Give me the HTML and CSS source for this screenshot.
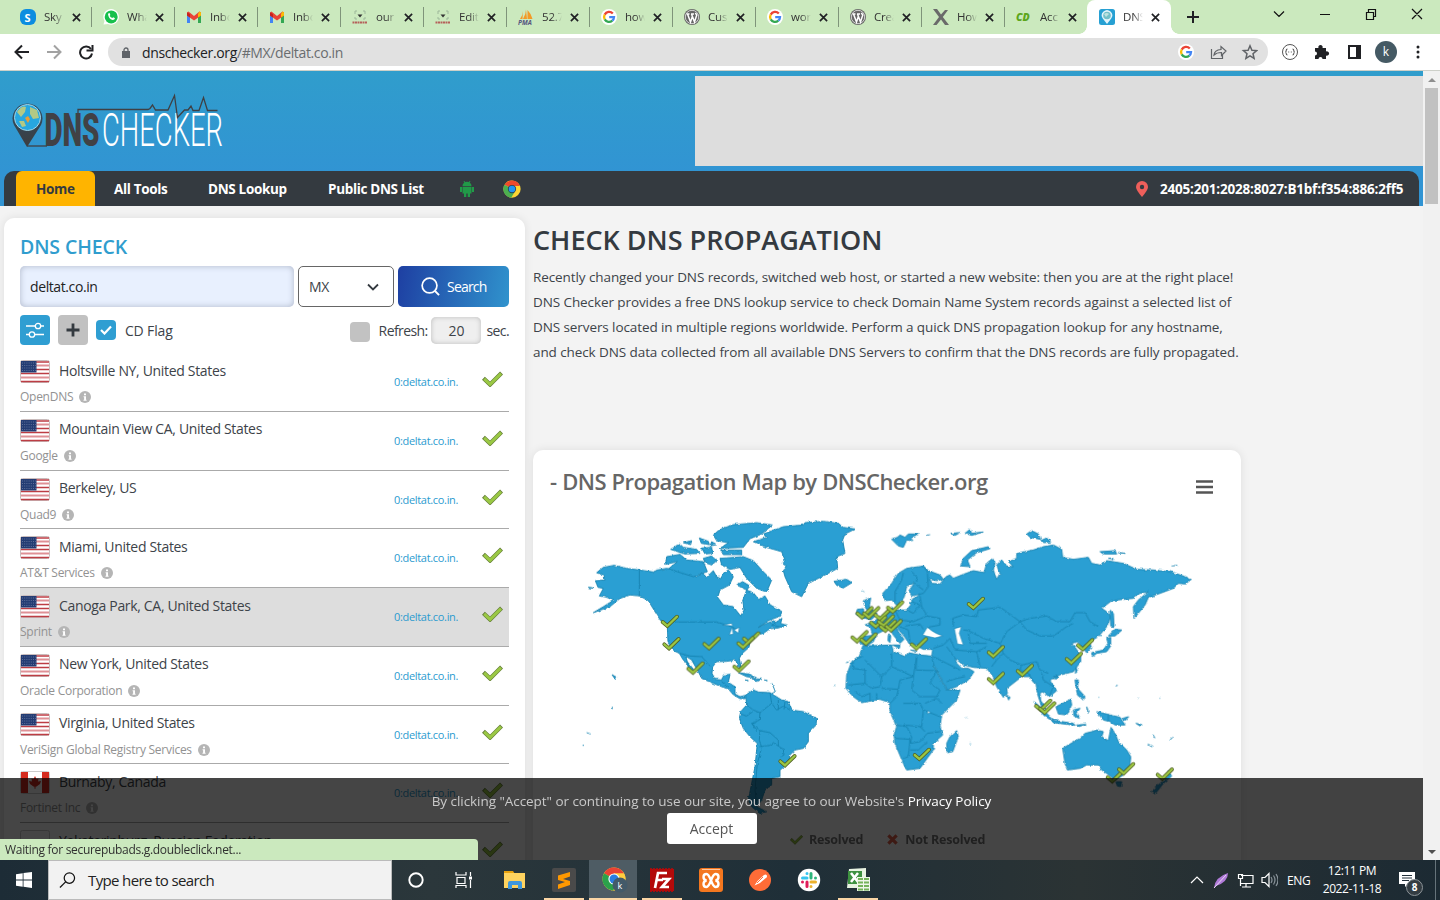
FILE: index.html
```html
<!DOCTYPE html>
<html lang="en">
<head>
<meta charset="utf-8">
<title>DNS Checker</title>
<link rel="stylesheet" href="styles.css">
</head>
<body>
<svg class="defs" aria-hidden="true">
  <defs>
    <linearGradient id="pin-grad" x1="0" y1="0" x2="0" y2="1"><stop offset="0" stop-color="#2c4e66"/><stop offset="1" stop-color="#3d3d3f"/></linearGradient>
    <symbol id="x" viewBox="0 0 10 10"><path d="M1 1l8 8M9 1l-8 8" stroke="#202124" stroke-width="1.9"/></symbol>
    <symbol id="gmail" viewBox="0 0 16 12"><path d="M1 1v11h3V4z" fill="#4285f4"/><path d="M15 1v11h-3V4z" fill="#34a853"/><path d="M1 1.500L2.500 .5 8 5 13.500 .5 15 1.500V4.500L8 9.500 1 4.500z" fill="#ea4335"/><path d="M12 3l1.500-2.500 1.500 1v3l-3 2z" fill="#fbbc04"/><path d="M1 1.500v3l3 2V3z" fill="#c5221f"/></symbol>
    <symbol id="google" viewBox="0 0 16 16"><circle cx="8" cy="8" r="8" fill="#fff"/><g fill="none" stroke-width="2.300"><path d="M11.800 4.500A5 5 0 0 0 3.700 5.600" stroke="#ea4335"/><path d="M3.700 5.600a5 5 0 0 0 0 4.800" stroke="#fbbc05"/><path d="M3.700 10.400a5 5 0 0 0 7.600 1.300" stroke="#34a853"/><path d="M11.300 11.700A5 5 0 0 0 13 8.200H8.200" stroke="#4285f4"/></g></symbol>
    <symbol id="tech" viewBox="0 0 16 16"><path d="M3 5V2h2M11 2h2v3M3 8v2h2M13 8v2h-2" fill="none" stroke="#9db79a"/><path d="M5.500 5.500h5L8 8.500z" fill="#333"/><path d="M.5 13.500h15" stroke="#b5605a" stroke-width="2" stroke-dasharray="2 .5"/></symbol>
    <symbol id="wp" viewBox="0 0 16 16"><circle cx="8" cy="8" r="8" fill="#666"/><circle cx="8" cy="8" r="6.700" fill="none" stroke="#eee" stroke-width=".8"/><path d="M2.500 5h3M7 5h3M3.500 5l3 8L8.500 7M7.500 5l3 8 2.300-7-1.500-2" fill="none" stroke="#fff" stroke-width="1.500"/></symbol>
    <symbol id="check" viewBox="0 0 60 46"><path d="M4 21L23 39 56 6" fill="none" stroke="#657d3a" stroke-width="12" stroke-linejoin="miter"/><path d="M6 22.500L23 38.500 54.500 7.500" fill="none" stroke="#9ac844" stroke-width="8.500"/></symbol>
    <g id="tick" fill="none" stroke-linecap="round"><path d="M6 23L20 35 49 7" stroke="#4d5d22" stroke-width="11.500"/><path d="M6 23L20 35 49 7" stroke="#9cc542" stroke-width="7"/></g>
    <symbol id="us" viewBox="0 0 30 23"><rect x=".5" y=".5" width="29" height="22" rx="2" fill="#fff" stroke="#c9bcbc"/><path d="M1 2h28M1 9.500h28M1 13.500h28M1 21.500h28" stroke="#bd3d44" stroke-width="1.300"/><path d="M1 5.500h28M1 17.500h28" stroke="#df9095" stroke-width="2"/><path d="M1 1h15.500v11.500H1z" fill="#243c73"/><path d="M2 3h14M2 5.500h14M2 8h14M2 10.500h14" stroke="#5f7099" stroke-dasharray="1 1.200"/></symbol>
    <symbol id="ca" viewBox="0 0 30 23"><rect x=".5" y=".5" width="29" height="22" rx="2" fill="#fff" stroke="#ccc"/><path d="M1 1h7v21H1zM22 1h7v21h-7z" fill="#d52b1e"/><path d="M15 5l1.500 3 2-.5-.5 3 3-.5-1 3-3.500 2.500-1 .2v2h-1v-2l-1-.2L10 13l-1-3 3 .5-.5-3 2 .5z" fill="#d52b1e"/></symbol>
    <symbol id="info" viewBox="0 0 12 12"><circle cx="6" cy="6" r="6" fill="#b5b5b5"/><path d="M5 2.500h2v1.700H5zM4.600 5.200H7v3.600h.6v1H4.500v-1h.6V6.200h-.5z" fill="#fff"/></symbol>
    <symbol id="chrome" viewBox="0 0 24 24"><circle cx="12" cy="12" r="11.500" fill="#ffcd3f"/><path d="M12 12L2 6.200A11.500 11.500 0 0 1 22 6.500H12z" fill="#e94234"/><path d="M2 6.200a11.500 11.500 0 0 0 9 17.300l6-8.500-5-3z" fill="#2ba14b"/><path d="M12 12l5 3-5.500 8.500A11.500 11.500 0 0 0 22 6.500H12z" fill="#ffcd3f"/><circle cx="12" cy="12" r="5.600" fill="#fff"/><circle cx="12" cy="12" r="4.500" fill="#2a7de1"/></symbol>
    <symbol id="chrome-old" viewBox="0 0 24 24"><circle cx="12" cy="12" r="11.500" fill="#fdd633"/><path d="M12 12L2 6.200A11.500 11.500 0 0 1 22.500 8H12z" fill="#ef4a2b"/><path d="M2 6.200a11.500 11.500 0 0 0 9 17.300l5-8.500-4-3z" fill="#4caf50"/><circle cx="12" cy="12" r="5.500" fill="#2d3e50"/><circle cx="12" cy="12" r="4.400" fill="#2196f3"/></symbol>
  </defs>
</svg>

<header class="tabs">
  <div class="tab"><svg class="fav"><rect x="0" y="0" width="16" height="16" rx="6" fill="#0c8de0"/><text x="4.500" y="12.500" class="fav-s">S</text></svg><span>Sky</span><svg class="close"><use href="#x"/></svg></div>
  <div class="tab"><svg class="fav" viewBox="0 0 16 16"><path d="M.5 15.500L1.500 12A7.800 7.800 0 1 1 5 15z" fill="#fff"/><circle cx="8.200" cy="7.900" r="6.500" fill="#18c04c"/><path d="M5 5q1.500-2 2 0l.3 1-.6 1q1 1.500 2.600 2l.9-.8 1.800 1q-.5 2-2.500 1.700Q5.500 10 5 5z" fill="#fff"/></svg><span>Wha</span><svg class="close"><use href="#x"/></svg></div>
  <div class="tab"><svg class="fav"><use href="#gmail" y="2" height="12"/></svg><span>Inbo</span><svg class="close"><use href="#x"/></svg></div>
  <div class="tab"><svg class="fav"><use href="#gmail" y="2" height="12"/></svg><span>Inbo</span><svg class="close"><use href="#x"/></svg></div>
  <div class="tab"><svg class="fav"><use href="#tech"/></svg><span>our</span><svg class="close"><use href="#x"/></svg></div>
  <div class="tab"><svg class="fav"><use href="#tech"/></svg><span>Edit</span><svg class="close"><use href="#x"/></svg></div>
  <div class="tab"><svg class="fav" viewBox="0 0 16 16"><path d="M2 10q3-4 3-8l-.5 8zM5 10q3-5 3-9.500l1 9.500zM9.500 1q4 4 5 9h-5z" fill="#f39a26"/><text x="0" y="15.500" class="fav-pma">PMA</text></svg><span>52.7</span><svg class="close"><use href="#x"/></svg></div>
  <div class="tab"><svg class="fav"><use href="#google"/></svg><span>how</span><svg class="close"><use href="#x"/></svg></div>
  <div class="tab"><svg class="fav"><use href="#wp"/></svg><span>Cus</span><svg class="close"><use href="#x"/></svg></div>
  <div class="tab"><svg class="fav"><use href="#google"/></svg><span>wor</span><svg class="close"><use href="#x"/></svg></div>
  <div class="tab"><svg class="fav"><use href="#wp"/></svg><span>Crea</span><svg class="close"><use href="#x"/></svg></div>
  <div class="tab"><svg class="fav" viewBox="0 0 16 16"><path d="M0 0h4l4 5.500L12 1h3L9.800 8 16 16h-4L8 10.500 3.500 16H0l6-8z" fill="#6a6a6a"/></svg><span>How</span><svg class="close"><use href="#x"/></svg></div>
  <div class="tab last"><svg class="fav" viewBox="0 0 16 16"><text x="0" y="12" class="fav-cd">CD</text></svg><span>Acc</span><svg class="close"><use href="#x"/></svg></div>
  <div class="tab active"><svg class="fav" viewBox="0 0 16 16"><rect width="16" height="16" rx="2.500" fill="#27a0d3"/><path d="M8 15L3.800 9.500a5.200 5.200 0 1 1 8.400 0z" fill="#e3f4fb"/><circle cx="8" cy="6.500" r="3.800" fill="#73c0c9"/><path d="M5 5q3-2 5 0L7 8z" fill="#bde2df"/></svg><span>DNS</span><svg class="close"><use href="#x"/></svg></div>
  <svg class="plus" viewBox="0 0 12 12"><path d="M6 0v12M0 6h12" stroke="#202124" stroke-width="2"/></svg>
  <svg class="winbtns" viewBox="0 0 150 12"><path d="M1 3.500l5 5 5-5M47 6.500h10M93.500 4.500h7v7h-7zM95.500 4V1.500h7v7H101M139 1l10 10M149 1l-10 10" fill="none" stroke="#111" stroke-width="1.200"/></svg>
</header>

<div class="toolbar">
  <svg class="navbtns" viewBox="0 0 80 16"><g fill="none" stroke-width="2"><path d="M15 8H2M8 1.500L1.500 8 8 14.500" stroke="#202124"/><path d="M33 8h13M40 1.500L46.500 8 40 14.500" stroke="#a2a2a2"/><path d="M77 5A6 6 0 1 0 78 9.500" stroke="#202124"/><path d="M72.500 6.500h6V1" stroke="#202124"/></g></svg>
  <div class="omnibox">
    <svg class="lock" viewBox="0 0 8 11"><path d="M0 4h8v7H0z" fill="#5f6368"/><path d="M2 4.500V3a2 2 0 0 1 4 0v1.500" fill="none" stroke="#5f6368" stroke-width="1.300"/></svg>
    <p class="url">dnschecker.org<i>/#MX/deltat.co.in</i></p>
    <svg class="omni-icons" viewBox="0 0 80 16"><use href="#google" width="16" height="16"/><g fill="none" stroke="#606367" stroke-width="1.200"><path d="M33.500 5v9.500h11V11M36 11q.5-5 7-5.500V2.500L48 7l-4.500 4.500V8.500Q38.500 8.500 36 11z"/><path d="M72 1.800l1.900 4.400 4.700.4-3.600 3.100 1.100 4.700L72 11.900l-4.100 2.500L69 9.700l-3.600-3.100 4.700-.4z" stroke-width="1.500"/></g></svg>
  </div>
  <svg class="ext" viewBox="0 0 82 16"><circle cx="8" cy="8" r="7.500" fill="none" stroke="#555"/><path d="M5.500 5q-1.300 0-1.300 1.500T3.200 8q1 0 1 1.500T5.500 11M10.500 5q1.300 0 1.300 1.500t1 1.500q-1 0-1 1.500T10.500 11M6.200 8h1M8.800 8h1" fill="none" stroke="#555" stroke-width="1.100"/><path d="M33 4h3.500a2.200 2.200 0 1 1 4 0H44v3.500a2.200 2.200 0 1 1 0 4V15h-3.500a2 2 0 0 0-4 0H33v-3.500a2 2 0 1 0 0-4z" fill="#202124"/><path d="M67 2h11v12H67z" fill="none" stroke="#202124" stroke-width="2"/><path d="M74 2h5v12h-5z" fill="#202124"/></svg>
  <b class="avatar">k</b>
  <svg class="dots" viewBox="0 0 4 14"><g fill="#202124"><circle cx="2" cy="2" r="1.500"/><circle cx="2" cy="7" r="1.500"/><circle cx="2" cy="12" r="1.500"/></g></svg>
</div>

<div class="viewport">
<div class="page">
  <div class="hero">
    <div class="brand">
      <svg class="logo" viewBox="10 90 220 62">
        <path d="M27 147L14 125a15 15 0 1 1 27 0z" fill="url(#pin-grad)"/>
        <circle cx="27.500" cy="117.500" r="13" fill="#27a7e0" stroke="#a5d7e9"/>
        <path d="M17 112q5-7 9-5l-1 5-4 5zM30 107l7 3 2 8-6 1-3-5zM19 121l5 0 2 5-4 1z" fill="#b3c985"/><path d="M25 118l3-2 2 3-2 4z" fill="#e99d35"/>
        <path d="M27 146h20" stroke="#3f4044" stroke-width="1.300"/>
        <text x="44.500" y="146" class="logo-dns" textLength="55" lengthAdjust="spacingAndGlyphs">DNS</text>
        <text x="102" y="146" class="logo-checker" textLength="121" lengthAdjust="spacingAndGlyphs">CHECKER</text>
        <path d="M78 113v-3.500h70l2-1 2.500-3.500 3 5H168l6.500-14.500 3 22 7-7.500h3.500l3-4 2 4.500h6l4.500-13 4 13h10" fill="none" stroke="#3f4044" stroke-width="1.300"/>
      </svg>
      <div class="ad"></div>
    </div>
    <nav class="nav">
      <a class="home">Home</a><a class="n-tools">All Tools</a><a class="n-look">DNS Lookup</a><a class="n-list">Public DNS List</a>
      <svg class="android" viewBox="0 0 14 16"><g fill="#219a48"><path d="M2.500 5a4.500 4.200 0 0 1 9 0zM2.500 5.700h9v6.800h-9zM0 6h2v5H0zM12 6h2v5h-2zM4 12h2.300v4H4zM7.700 12H10v4H7.700z"/></g><path d="M4 0l1 2M10 0L9 2" stroke="#219a48"/></svg>
      <svg class="nav-chrome"><use href="#chrome-old"/></svg>
      <svg class="pin" viewBox="0 0 12 16"><path d="M6 16Q0 9 0 6a6 6 0 0 1 12 0q0 3-6 10z" fill="#ee5f5b"/><circle cx="6" cy="6" r="2.200" fill="#343a40"/></svg>
      <span class="ip">2405:201:2028:8027:B1bf:f354:886:2ff5</span>
    </nav>
  </div>

  <main class="main">
    <section class="card check">
      <h2>DNS CHECK</h2>
      <div class="form">
        <div class="host">deltat.co.in</div>
        <div class="select">MX<svg viewBox="0 0 12 8"><path d="M1 1.500l5 5 5-5" fill="none" stroke="#343a40" stroke-width="1.800"/></svg></div>
        <div class="btn"><svg viewBox="0 0 20 20"><circle cx="9" cy="9" r="7.800" fill="none" stroke="#fff" stroke-width="1.800"/><path d="M14.500 14.500L19 19" stroke="#fff" stroke-width="2"/></svg>Search</div>
      </div>
      <div class="opts">
        <div class="sq blue"><svg viewBox="0 0 18 16"><g fill="none" stroke="#fff" stroke-width="1.300"><path d="M0 4h9M15 4h3M0 12.500h3M9 12.500h9"/><circle cx="12" cy="4" r="2.700"/><circle cx="6" cy="12.500" r="2.700"/></g></svg></div>
        <div class="sq grey"><svg viewBox="0 0 14 14"><path d="M7 .5v13M.5 7h13" stroke="#343a40" stroke-width="2.800"/></svg></div>
        <div class="cb on"><svg viewBox="0 0 12 10"><path d="M1 5l3.500 3.500L11 1.500" fill="none" stroke="#fff" stroke-width="2.200"/></svg></div>
        <span class="cd">CD Flag</span>
        <div class="cb off"></div><span class="rf">Refresh:</span><div class="secs">20</div><span class="sec">sec.</span>
      </div>
      <div class="rows">
        <div class="row"><svg class="flag"><use href="#us"/></svg><div class="who"><p class="r1">Holtsville NY, United States</p><p class="r2">OpenDNS<svg><use href="#info"/></svg></p></div><a>0:deltat.co.in.</a><svg class="ok"><use href="#check"/></svg></div>
        <div class="row"><svg class="flag"><use href="#us"/></svg><div class="who"><p class="r1">Mountain View CA, United States</p><p class="r2">Google<svg><use href="#info"/></svg></p></div><a>0:deltat.co.in.</a><svg class="ok"><use href="#check"/></svg></div>
        <div class="row"><svg class="flag"><use href="#us"/></svg><div class="who"><p class="r1">Berkeley, US</p><p class="r2">Quad9<svg><use href="#info"/></svg></p></div><a>0:deltat.co.in.</a><svg class="ok"><use href="#check"/></svg></div>
        <div class="row"><svg class="flag"><use href="#us"/></svg><div class="who"><p class="r1">Miami, United States</p><p class="r2">AT&amp;T Services<svg><use href="#info"/></svg></p></div><a>0:deltat.co.in.</a><svg class="ok"><use href="#check"/></svg></div>
        <div class="row hover"><svg class="flag"><use href="#us"/></svg><div class="who"><p class="r1">Canoga Park, CA, United States</p><p class="r2">Sprint<svg><use href="#info"/></svg></p></div><a>0:deltat.co.in.</a><svg class="ok"><use href="#check"/></svg></div>
        <div class="row"><svg class="flag"><use href="#us"/></svg><div class="who"><p class="r1">New York, United States</p><p class="r2">Oracle Corporation<svg><use href="#info"/></svg></p></div><a>0:deltat.co.in.</a><svg class="ok"><use href="#check"/></svg></div>
        <div class="row"><svg class="flag"><use href="#us"/></svg><div class="who"><p class="r1">Virginia, United States</p><p class="r2">VeriSign Global Registry Services<svg><use href="#info"/></svg></p></div><a>0:deltat.co.in.</a><svg class="ok"><use href="#check"/></svg></div>
        <div class="row"><svg class="flag"><use href="#ca"/></svg><div class="who"><p class="r1">Burnaby, Canada</p><p class="r2">Fortinet Inc<svg><use href="#info"/></svg></p></div><a>0:deltat.co.in.</a><svg class="ok"><use href="#check"/></svg></div>
        <div class="row"><svg class="flag" viewBox="0 0 30 23"><rect x=".5" y=".5" width="29" height="22" rx="2" fill="#fff" stroke="#ccc"/></svg><div class="who"><p class="r1">Yekaterinburg, Russian Federation</p></div><svg class="ok end"><use href="#check"/></svg></div>
      </div>
    </section>

    <section class="right">
      <h1>CHECK DNS PROPAGATION</h1>
      <div class="intro">
        <p>Recently changed your DNS records, switched web host, or started a new website: then you are at the right place!</p>
        <p>DNS Checker provides a free DNS lookup service to check Domain Name System records against a selected list of</p>
        <p>DNS servers located in multiple regions worldwide. Perform a quick DNS propagation lookup for any hostname,</p>
        <p>and check DNS data collected from all available DNS Servers to confirm that the DNS records are fully propagated.</p>
      </div>
      <div class="card mapcard">
        <div class="maphead"><h3>- DNS Propagation Map by DNSChecker.org</h3><svg viewBox="0 0 17 14"><path d="M0 1.500h17M0 7h17M0 12.500h17" stroke="#555" stroke-width="2.600"/></svg></div>
        <svg class="map" viewBox="0 0 1920 930">
          <defs><filter id="coast" x="-2%" y="-2%" width="104%" height="104%"><feTurbulence type="fractalNoise" baseFrequency=".09" numOctaves="2" seed="4"/><feDisplacementMap in="SourceGraphic" scale="8" xChannelSelector="R" yChannelSelector="G"/></filter></defs>
          <g class="land" filter="url(#coast)">
            <path d="M80 188L100 172 132 166 170 175 208 180 250 186 262 180 290 175 325 182 350 192 380 200 398 190 410 202 430 182 440 200 452 206 462 188 475 180 490 200 478 225 450 240 443 262 460 285 490 290 512 318 522 300 518 272 530 240 550 248 566 268 585 258 600 284 635 304 632 318 600 330 565 352 590 340 612 332 622 344 646 346 625 354 600 356 580 370 555 374 540 395 537 412 515 432 508 445 514 478 503 468 497 450 470 454 440 455 428 470 426 490 435 508 455 510 460 495 480 493 475 517 495 530 495 552 510 560 527 556 526 566 510 566 490 554 475 537 455 530 430 520 395 505 385 485 365 450 347 438 352 455 372 480 366 485 340 450 328 430 312 422 294 398 292 350 272 332 252 300 235 272 210 258 180 255 150 265 120 290 70 308 100 290 132 270 110 262 88 258 100 235 84 232 80 222 76 212 105 210 102 196Z"/>
            <path d="M550 95L590 82 580 72 640 50 700 45 705 38 760 34 805 40 820 52 855 57 825 72 818 90 825 130 800 140 803 175 765 195 735 210 715 220 695 260 665 245 645 200 640 182 652 170 636 160 645 150 635 125 590 112Z"/>
            <path d="M430 75L450 58 490 44 560 38 607 45 575 72 540 86 520 112 450 115 475 98 440 92ZM452 120H515V134H460ZM290 140L330 133 350 150 400 155 412 185 370 200 322 185 296 176 322 155 287 163ZM400 145L425 138 440 152 425 165 405 158ZM450 145L520 140 550 152 575 180 605 210 590 246 560 235 530 205 510 172 480 178 455 165ZM302 118L330 103 340 112 380 118 390 130 345 132ZM340 98L365 92 362 104ZM388 84L415 94 418 104 394 100ZM425 95L440 104 420 108ZM395 114L425 112 428 130 405 132ZM500 225L518 215 540 228 530 240ZM792 214L830 208 846 218 820 234 800 226ZM55 232L72 235ZM605 345L636 325 632 340 650 346 636 352ZM350 455L357 470"/>
            <path d="M505 488L535 492 560 504 530 500ZM545 505L575 508 560 515ZM525 510L535 512ZM583 510L592 512ZM126 494L140 502 136 508ZM50 668L62 672M127 590V594M38 706H42M795 524V528"/>
            <path d="M606 520L616 545 606 550" class="isles"/>
            <path d="M550 540L565 546 600 548 635 570 655 575 665 600 700 605 740 625 738 645 715 670 715 695 700 715 675 720 660 735 655 760 630 780 630 800 605 805 605 825 585 840 575 870 560 890 590 905 570 910 545 890 535 870 545 820 555 770 562 700 540 680 520 655 508 625 512 605 530 585 527 555Z"/>
            <path d="M530 585L550 600 570 608 590 592 605 580 600 548M605 580L620 600 640 588 660 600M512 612L530 618 548 605M570 608L568 630 545 640 570 662 568 690M545 640L560 662M570 662L600 668 625 690 625 708 640 718 642 735 632 740M568 710L600 706 610 698 625 708M568 690L575 712 562 760 555 840 560 880M208 180V258M300 336H440L480 348 510 365M330 430L360 438 395 440 420 468M455 515L475 530M625 572V600M645 575L642 598" class="border"/>
            <g transform="translate(810 0)">
              <path d="M250 168L265 182 300 195 310 208 290 212 268 208 275 220 300 222 318 200 330 195 340 205 365 195 400 182 432 188 440 160 455 147 465 155 460 180 470 208 480 190 470 165 485 150 500 168 520 170 505 155 530 145 530 130 580 120 610 110 640 105 665 118 668 142 700 148 745 142 755 160 780 165 800 152 850 160 890 178 940 180 990 185 1030 198 1052 210 1035 222 1015 220 1000 235 960 250 925 262 915 285 882 326 880 290 895 270 925 245 900 250 880 265 850 268 815 272 785 295 800 305 812 320 800 350 775 380 748 395 755 415 740 428 725 410 712 395 695 400 705 412 722 435 722 455 700 485 660 495 640 502 630 512 650 542 628 560 607 545 600 550 602 572 622 600 605 590 592 550 588 520 580 517 570 500 545 500 500 535 502 550 490 562 470 530 460 500 440 475 400 472 370 465 345 445 350 460 365 475 385 475 402 485 385 510 350 530 322 540 300 500 274 450 278 418 250 418 225 405 210 405 195 382 165 345 175 365 192 388 180 400 160 375 148 355 135 360 110 372 100 395 80 408 60 400 62 380 98 376 92 352 75 345 100 335 130 315 150 305 155 290 162 300 200 300 212 285 212 270 235 258 245 200Z"/>
              <path d="M175 190L200 175 250 168 262 185 265 230 250 250 215 258 207 242 224 218 200 230 192 262 172 288 155 270 135 272 128 250 155 220ZM70 272L92 264 88 290 112 312 95 328 68 324 86 308 75 290ZM48 312L52 298 70 296 72 312 60 320ZM155 88L172 82 180 75 195 82 205 72 238 72 212 82 218 92 200 90 190 112 175 108ZM445 110L395 122 370 145 362 168 390 170 382 150 410 128 450 116ZM330 70L360 68 345 76ZM375 70L390 58 395 70 430 66 395 76ZM560 72L575 62 595 72 602 88 570 82ZM602 92L620 84 632 96 612 98ZM780 125L825 122 830 132 790 132ZM835 128L856 130ZM805 145L820 146ZM995 168L1012 166M755 428L790 420 804 400 800 385 812 382 812 408 800 425 770 430 757 440ZM805 378L825 358 846 360 825 378ZM810 300L820 310 822 350 812 348ZM708 472L712 484 706 490ZM158 405L180 405 178 415ZM145 375L152 378 150 398 144 392ZM68 242L72 246M260 76L270 74M212 420L230 424ZM18 458L26 456"/>
              <path d="M128 315L140 330 165 345M165 300L180 330 220 335M200 300L220 310 240 285 215 275M220 335L260 318 300 325 300 345 262 352M180 330L180 350 205 360 210 395M195 348L240 342 250 358M240 258L245 290 262 318M190 188L185 210 165 245 165 275M215 185L230 200 230 215M340 350L338 325 370 315 410 320 415 300 480 292 500 305 540 335 570 325 620 318 650 335 690 335 705 308 735 308 750 335 775 350M540 335L560 360 600 378 640 378 680 350 700 340M540 335L500 365 480 400 430 385 385 362 370 360M480 400L490 430 510 450 545 465 590 455 600 480 625 490M385 370L390 400 440 400M330 385L345 420 410 425 440 410M410 425L420 470M490 430L470 450 455 470M280 415L310 405 330 385M280 440L320 460 360 480M320 410L345 445M320 515L350 505 375 500M545 465L540 480 565 490 580 515M605 490L610 510 640 530 630 555M75 385L70 405M230 225L250 240" class="border"/>
              <path d="M68 408L155 405 160 425 195 440 205 428 240 435 275 438 282 470 300 505 320 540 360 540 350 570 305 615 300 650 308 675 280 700 280 720 265 740 240 775 200 780 190 760 165 700 162 675 170 650 150 605 150 578 120 568 65 578 40 560 18 535 20 495 35 455 60 435Z"/>
              <path d="M66 440L40 450 38 475 75 480 75 520 25 525M75 450L125 500 155 470 155 430M125 500L120 530 95 535 75 520M155 470L220 500 230 440 228 480 290 482M220 500L215 540 240 560 290 560 300 540M125 535L175 538 180 510 220 500M175 538L170 560 150 580M45 545L65 560 90 550V575M110 550V568M190 580L240 580 250 600 245 650 190 645M165 645L200 650 215 680 212 700 240 695 262 670 300 665M250 600L300 620M255 580L290 565 305 580M165 685L210 688 205 740 190 745M210 720L235 720 262 695M240 650L255 665M290 482L270 520 300 540" class="border"/>
              <path d="M350 662L355 680 338 725 322 728 320 700 330 680ZM668 715L690 702 720 685 735 670 755 665 770 660 790 665 785 680 805 692 813 652 825 670 835 695 860 720 872 740 870 765 850 795 825 810 800 790 785 780 775 765 740 765 720 775 682 780 675 760ZM828 815L845 815 842 830 832 828ZM985 785L995 798 970 820 945 852 935 845 960 820 975 810ZM582 575L600 590 630 620 635 632 610 615ZM635 630L700 640 705 646 640 638ZM710 645L738 643 715 650ZM648 590L692 568 695 585 680 615 655 612ZM700 600L720 595 708 610 718 625 702 618ZM705 510L715 510 713 535 735 560 730 570 712 555ZM770 605L800 612 840 622 855 645 825 645 810 635 790 630ZM848 625L866 620 855 632ZM888 640L906 645 900 648ZM500 555L510 562 506 570ZM938 674L944 684ZM924 703L936 710ZM990 690L998 682ZM740 590L745 610ZM640 500L655 500 645 508ZM379 622V624M391 700V703M828 530L832 524M775 562H777M893 565H895M958 565H960"/>
              <path d="M805 615V635" class="border"/>
            </g>
          </g>
          <g fill="#fff" stroke="#1b87b6" stroke-width="2"><path d="M1058 375L1072 352 1085 362 1098 370 1118 378 1095 384 1068 378ZM1153 356L1174 350 1168 370 1180 405 1162 402Z"/><path d="M458 346L485 340 488 348ZM478 375L486 352 490 372ZM492 360L508 352 505 370ZM1074 600L1080 608 1072 612Z"/></g>
          <g>
            <use href="#tick" x="272" y="313"/><use href="#tick" x="277" y="380"/><use href="#tick" x="397" y="379"/><use href="#tick" x="516" y="363"/><use href="#tick" x="499" y="377"/><use href="#tick" x="349" y="453"/><use href="#tick" x="487" y="447"/><use href="#tick" x="625" y="731"/>
            <use href="#tick" x="856" y="287"/><use href="#tick" x="876" y="287"/><use href="#tick" x="910" y="292"/><use href="#tick" x="948" y="270"/><use href="#tick" x="897" y="315"/><use href="#tick" x="920" y="312"/><use href="#tick" x="926" y="327"/><use href="#tick" x="943" y="326"/><use href="#tick" x="841" y="359"/><use href="#tick" x="868" y="366"/>
            <use href="#tick" x="1019" y="380"/><use href="#tick" x="1190" y="259"/><use href="#tick" x="1250" y="404"/><use href="#tick" x="1337" y="460"/><use href="#tick" x="1250" y="484"/><use href="#tick" x="1484" y="424"/><use href="#tick" x="1518" y="383"/><use href="#tick" x="1392" y="565"/><use href="#tick" x="1404" y="573"/><use href="#tick" x="1028" y="712"/><use href="#tick" x="1607" y="779"/><use href="#tick" x="1641" y="755"/><use href="#tick" x="1757" y="771"/>
          </g>
        </svg>
        <div class="legend"><svg class="lg-ok"><use href="#check"/></svg><b>Resolved</b><svg class="lg-no" viewBox="0 0 12 12"><path d="M1.500 1.500l9 9M10.500 1.500l-9 9" stroke="#e0614a" stroke-width="3.500"/></svg><b>Not Resolved</b></div>
      </div>
    </section>
  </main>

  <div class="cookie"><p>By clicking "Accept" or continuing to use our site, you agree to our Website's <span>Privacy Policy</span></p><div class="accept">Accept</div></div>
  <div class="status">Waiting for securepubads.g.doubleclick.net...</div>
</div>
<div class="scroll"><svg viewBox="0 0 8 5"><path d="M0 5l4-4 4 4z" fill="#8f8f8f"/></svg><div class="thumb"></div><svg class="down" viewBox="0 0 8 5"><path d="M0 0l4 4 4-4z" fill="#505050"/></svg></div>
</div>

<footer class="taskbar">
  <div class="start"><svg viewBox="0 0 16 16"><path d="M0 2.200l6.700-1v6.300H0zM7.500 1.100L16 0v7.500H7.500zM0 8.400h6.700v6.400L0 13.800zM7.500 8.400H16V16l-8.500-1.200z" fill="#fff"/></svg></div>
  <div class="search"><svg viewBox="0 0 18 18"><circle cx="11" cy="7" r="5.500" fill="none" stroke="#111" stroke-width="1.300"/><path d="M7 11L1 17" stroke="#111" stroke-width="1.300"/></svg>Type here to search</div>
  <div class="cell"><svg viewBox="0 0 24 24"><circle cx="12" cy="12" r="6.700" fill="none" stroke="#fff" stroke-width="1.900"/></svg></div>
  <div class="cell tv"><svg viewBox="0 0 24 24"><path d="M4 4v3h10V4M5 9.500h8v6H5zM4 20v-2.500h10V20M18.500 4v4M18.500 12v8" fill="none" stroke="#fff" stroke-width="1.200"/><path d="M17 8.500h3v3h-3z" fill="#fff"/></svg></div>
  <div class="cell"><svg viewBox="0 0 24 24"><path d="M1 3h9l2 3H1z" fill="#e9a20f"/><path d="M1 5h21v15H1z" fill="#ffd35f"/><path d="M5 21v-6q0-2 2-2h10q2 0 2 2v6h-4v-4H9v4z" fill="#3f97dc"/></svg></div>
  <div class="cell run"><svg viewBox="0 0 24 24"><rect width="24" height="24" rx="2" fill="#4a4a4a"/><path d="M6 7.500L18 4v4.500L11 11l7 2v4L6 21v-4.500l7-2.500-7-2z" fill="#ff9800"/></svg></div>
  <div class="cell run current"><svg viewBox="0 0 26 26"><use href="#chrome" width="24" height="24"/><circle cx="18" cy="18" r="7.500" fill="#435a69"/><text x="15.500" y="21.500" class="mini-k">k</text></svg></div>
  <div class="cell run"><svg viewBox="0 0 24 24"><rect y="1" width="24" height="22" fill="#b30a0a"/><path d="M0 .7h24M0 23.400h24" stroke="#b30a0a" stroke-dasharray="2 1"/><path d="M5 20L8 5h9M7 12h6M12 11h7l-7 8h7" fill="none" stroke="#fff" stroke-width="2.700"/></svg></div>
  <div class="cell"><svg viewBox="0 0 24 24"><rect width="24" height="24" rx="3" fill="#f4771f"/><path d="M3 1.500h18" stroke="#ffc69b"/><path d="M7.500 12.500C5 12 4.500 10.500 4.500 9c0-2 1-3 3-3 4 0 5 13 9 13 2 0 3-1 3-3 0-1.500-.5-3-3-3.500 2.500-.5 3-2 3-3.500 0-2-1-3-3-3-4 0-5 13-9 13-2 0-3-1-3-3 0-1.500.5-3 3-3.500z" fill="none" stroke="#fff" stroke-width="2.400"/></svg></div>
  <div class="cell"><svg viewBox="0 0 24 24"><circle cx="12" cy="12" r="11" fill="#ff6c37"/><path d="M6.500 17.500l3-4.500 6.500-6q1.500-1 2.500 0t0 2.500l-6.500 5.500z" fill="#fff"/><path d="M9 15l6-6" stroke="#ff6c37"/></svg></div>
  <div class="cell"><svg viewBox="0 0 24 24"><circle cx="12" cy="12" r="11.200" fill="#fff"/><g fill="none" stroke-width="3" stroke-linecap="round"><path d="M10 5.500v0M5.500 10h4.500" stroke="#36c5f0"/><path d="M14 5.500v4.500M18.500 10h0" stroke="#2eb67d"/><path d="M14 14h4.500M14 18.500v0" stroke="#ecb22e"/><path d="M10 14v4.500M5.500 14h0" stroke="#e01e5a"/></g></svg></div>
  <div class="cell run"><svg viewBox="0 0 24 24"><path d="M3 1l17-1v20H1z" fill="#e8f3e2"/><path d="M2 3h14v13H2z" fill="#3d9140"/><path d="M5 5l7 9M12 5l-7 9" stroke="#fff" stroke-width="2.500"/><path d="M11 9h13v14H11z" fill="#eef6e9"/><path d="M12 11h11M12 14.500h11M12 18h11M12 21.500h11" stroke="#74b359" stroke-width="2.200" stroke-dasharray="5 1"/></svg></div>
  <div class="tray">
    <svg class="t-icons" viewBox="0 0 88 18"><g fill="none" stroke="#fff" stroke-width="1.200"><path d="M1 12l6-6 6 6"/><path d="M51 4.500h12v8H51M56 12.500v3M52 16h9M48.500 3.500h4v4h-4zM50.500 7.500V15"/><path d="M72 6.500h3l4-4v13l-4-4h-3z"/><path d="M81 6q2 3 0 6M83.500 4.500q3 4.500 0 9M86 3q4 6 0 12" stroke="#89939a"/></g><path d="M24 17q1-11 14-15 0 9-12 13z" fill="#b07ad8"/><path d="M24 17L36 4" stroke="#e9d6f7"/></svg>
    <span class="eng">ENG</span>
    <div class="clock"><p>12:11 PM</p><p>2022-11-18</p></div>
    <div class="note"><svg viewBox="0 0 16 16"><path d="M0 0h16v12h-7l-3 3v-3H0z" fill="#fff"/><path d="M3 3.500h10M3 6h10M3 8.500h7" stroke="#22303a"/></svg><b>8</b></div>
  </div>
</footer>
</body>
</html>
```
FILE: styles.css
```css
*{box-sizing:border-box}
body{margin:0;width:1440px;height:900px;overflow:hidden;display:flex;flex-direction:column;font-family:"Open Sans","Noto Sans",sans-serif;font-size:14px;color:#3d4349}
p,h1,h2,h3{margin:0}
svg{display:block;flex:none}
.defs{position:absolute;width:0;height:0}

.tabs{height:34px;background:#cbe9be;display:flex;padding-left:8px;flex:none}
.tab{width:83px;height:34px;display:flex;align-items:center;padding-left:12px;position:relative;flex:none}
.tab:not(.active):not(.last)::after{content:"";position:absolute;right:-1px;top:7px;width:1px;height:20px;background:#7f947a}
.tab span{width:20px;margin-left:8px;overflow:hidden;white-space:nowrap;font-size:11.500px;letter-spacing:-.2px;line-height:18px;-webkit-mask-image:linear-gradient(90deg,#000 50%,transparent);mask-image:linear-gradient(90deg,#000 50%,transparent);color:#333}
.fav{width:16px;height:16px}
.fav-s{font:bold 11px "Open Sans",sans-serif;fill:#fff}
.fav-pma{font:italic bold 6.500px "Open Sans",sans-serif;fill:#55557f}
.fav-cd{font:italic 800 10.500px "Open Sans",sans-serif;fill:#5ca61c}
.close{width:9px;height:9px;margin-left:8px}
.active{width:84px;background:#fff;border-radius:8px 8px 0 0}
.active::before,.active::after{content:"";position:absolute;bottom:0;width:8px;height:8px}
.active::before{left:-8px;background:radial-gradient(circle at 0 0,transparent 7.500px,#fff 8px)}
.active::after{right:-8px;background:radial-gradient(circle at 100% 0,transparent 7.500px,#fff 8px)}
.plus{width:12px;height:12px;margin:11px 0 0 16px}
.winbtns{width:150px;height:12px;margin:8px 0 0 74px}

.toolbar{height:37px;background:#fff;border-bottom:1px solid #cdd0c9;display:flex;align-items:center;flex:none}
.navbtns{width:80px;height:16px;margin-left:14px}
.omnibox{margin-left:14px;width:1160px;height:28px;border-radius:14px;background:#e1e1e1;display:flex;align-items:center;padding-left:14px}
.lock{width:8px;height:11px}
.url{margin-left:12px;width:1036px;font-size:14px;letter-spacing:-.37px;color:#202124}
.url i{font-style:normal;color:#6a6d70}
.omni-icons{width:80px;height:16px}
.ext{width:82px;height:16px;margin-left:14px}
.avatar{width:22px;height:22px;border-radius:50%;background:#455a64;color:#fff;font-size:12px;font-weight:400;line-height:21px;text-align:center;margin-left:11px}
.dots{width:4px;height:14px;margin-left:19px}

.viewport{height:789px;display:flex;flex:none}
.page{width:1423px;height:789px;overflow:hidden;position:relative;background:#f3f3f3}
.hero{height:135px;background:linear-gradient(#309dcc,#3194d3 75%,#3194d3)}
.brand{height:100px;display:flex;justify-content:space-between;padding-top:5px}
.logo{width:220px;height:62px;margin:14px 0 0 10px}
.logo-dns{font:900 46px Roboto,sans-serif;fill:#414145}
.logo-checker{font:300 46px Roboto,sans-serif;fill:#fff}
.ad{width:728px;height:90px;background:#ddd}
.nav{height:35px;margin:0 4px;background:#343a40;border-radius:10px 10px 0 0;display:flex;align-items:center;padding-left:12px;color:#fff;font-size:13.500px;font-weight:700;white-space:nowrap}
.nav a{letter-spacing:-.33px;padding-left:20px}
.nav .home{width:79px;height:35px;line-height:36px;background:#ffb400;color:#343a40;border-radius:6px 6px 0 0}
.nav .n-tools{width:93px;padding-left:19px}
.nav .n-look{width:120px}
.nav .n-list{width:152px}
.android{width:14px;height:16px}
.nav-chrome{width:18px;height:18px;margin-left:29px}
.pin{width:12px;height:16px;margin-left:615px}
.ip{margin-left:12px;letter-spacing:-.2px}

.main{display:flex;align-items:flex-start;padding:12px 0 0 4px;gap:8px}
.card{background:#fff;border-radius:10px;box-shadow:0 0 10px rgba(0,0,0,.09)}
.check{width:521px;height:720px;padding:16px}
.check h2{font-size:19.500px;font-weight:600;color:#309dce;line-height:26px;letter-spacing:-.1px}
.form{display:flex;gap:4px;margin-top:6px}
.form>div{height:41px;border-radius:5px;display:flex;align-items:center}
.host{width:274px;background:#e8f0fe;box-shadow:inset 0 0 6px #aeb6c9;padding-left:10px;letter-spacing:-.4px;color:#222}
.select{width:96px;border:1px solid #666;padding:0 14px 0 10px;justify-content:space-between;letter-spacing:-.3px}
.select svg{width:12px;height:8px}
.btn{width:111px;background:linear-gradient(100deg,#1e3fa2,#3093cd);color:#fff;padding-left:23px;gap:7px;letter-spacing:-.8px}
.btn svg{width:19px;height:19px}
.opts{display:flex;align-items:center;height:30px;margin-top:8px;white-space:nowrap}
.sq{width:30px;height:30px;border-radius:4px;display:flex;align-items:center;justify-content:center}
.blue,.on{background:#2f9ed2}
.grey{background:#c1c1c1;margin-left:8px}
.sq svg{width:18px;height:16px}
.grey svg{width:14px;height:14px}
.cb{width:20px;height:20px;border-radius:4px;display:flex;align-items:center;justify-content:center}
.cb svg{width:12px;height:10px}
.on{margin-left:8px}
.off{background:#c2c2c2;margin-top:3px}
.cd{width:225px;margin-left:9px;letter-spacing:-.15px}
.rf{width:52px;margin-left:9px;letter-spacing:-.6px}
.secs{width:51px;height:27px;border-radius:5px;background:#efefef;box-shadow:inset 0 0 5px #bbb;text-align:center;line-height:27px;padding-left:1px}
.sec{margin-left:5px;letter-spacing:-.6px}
.rows{margin-top:8px}
.row{height:58.750px;border-bottom:1px solid #aaa;display:flex;white-space:nowrap}
.flag{width:30px;height:23px;margin-top:7px}
.who{width:344px}
.r1{margin-left:9px;line-height:20px;padding-top:7.500px;letter-spacing:-.33px}
.r2{margin-left:-30px;display:flex;align-items:center;font-size:12px;line-height:16px;margin-top:8.500px;color:#929292;letter-spacing:-.27px}
.r2 svg{width:12px;height:12px;margin-left:6px}
.row a{width:88px;font-size:11px;line-height:16px;margin-top:21px;color:#2b9bcf;letter-spacing:-.32px}
.ok{width:21px;height:16px;margin-top:18px}
.end{margin-left:88px}
.hover{background:#ddd}

.right{width:708px}
h1{font-size:27px;font-weight:600;line-height:32px;margin-top:6px;letter-spacing:0;white-space:nowrap;color:#343a40}
.intro{margin-top:9px;font-size:13.500px;line-height:25px;white-space:nowrap;height:185px;letter-spacing:-.09px}
.mapcard{height:430px;padding:16px}
.maphead{display:flex;justify-content:space-between;height:44px;padding-right:12px}
.maphead h3{font-size:22px;line-height:31px;font-weight:600;color:#666;letter-spacing:-.53px;word-spacing:.4px;padding-left:1px}
.maphead svg{width:17px;height:14px;margin-top:14px}
.map{width:640px;height:310px;margin-left:21px}
.land path{fill:#2a9fd3;stroke:#1682b0;stroke-width:2.700;stroke-linejoin:round}
.land .border,.land .isles{fill:none}
.legend{display:flex;align-items:center;margin:11px 0 0 241px;font-size:12.500px;color:#777;letter-spacing:-.2px}
.lg-ok{width:13px;height:11px;margin-right:6px}
.lg-no{width:11px;height:11px;margin:0 7px 0 24px}

.cookie{position:absolute;left:0;top:707px;width:1423px;height:82px;background:rgba(0,0,0,.73);display:flex;flex-direction:column;align-items:center;color:#c9c9c9}
.cookie p{font-size:13.500px;line-height:20px;margin-top:13px;letter-spacing:-.05px}
.cookie span{color:#fff}
.accept{width:90px;height:31px;margin-top:2px;background:#fff;border-radius:3px;color:#555;line-height:31px;text-align:center;font-size:14px}
.status{position:absolute;left:0;top:768px;width:478px;height:21px;background:#cbe9be;border-radius:0 4px 0 0;padding-left:5px;font-size:12px;line-height:21px;letter-spacing:-.31px;color:#303030}
.scroll{width:17px;background:#f1f1f1;display:flex;flex-direction:column;align-items:center}
.scroll svg{width:8px;height:5px;margin-top:6px}
.thumb{width:13px;height:116px;background:#c1c1c1;margin-top:6px}
.scroll .down{margin-top:auto;margin-bottom:5px}

.taskbar{height:40px;background:linear-gradient(90deg,#1d2c36,#2b373b 30%,#1f2f38 55%,#2b3334 75%,#1c2a33);display:flex;flex:none;color:#fff}
.start{width:48px;display:flex;align-items:center;justify-content:center}
.start svg{width:16px;height:16px}
.search{width:344px;background:#f2f2f2;border:1px solid #bbb;color:#222;font-size:15px;display:flex;align-items:center;letter-spacing:-.63px;padding-left:10px;gap:12px}
.search svg{width:17px;height:18px}
.cell{width:48px;height:40px;display:flex;align-items:center;justify-content:center;margin-right:1px;border-bottom:2px solid transparent;padding-top:2px;flex:none}
.cell svg{width:24px;height:24px}
.search+.cell{margin-right:0}
.tv{margin-right:3px}
.run{position:relative}
.run::after{content:"";position:absolute;left:4px;bottom:-2px;width:40px;height:2px;background:#fbd6a5}
.current{background:#4e5c64}
.current::after{left:0;width:48px}
.cell.current svg{width:26px;height:26px;margin-left:3px}
.mini-k{font:9px "Open Sans",sans-serif;fill:#fff}
.tray{margin-left:307px;display:flex;align-items:center}
.t-icons{width:88px;height:18px}
.eng{font-size:12px;width:24px;margin-left:9px;letter-spacing:-.3px}
.clock{width:64px;margin-left:9px;text-align:center;font-size:12px;line-height:18px;letter-spacing:-.4px;white-space:nowrap}
.note{width:37px;height:40px;margin-left:15px;padding-top:12px;position:relative;border-right:1px solid #66737a}
.note svg{width:16px;height:16px}
.note b{position:absolute;left:7px;top:19px;width:17px;height:17px;border-radius:50%;background:#333c42;border:1px solid #8d9498;font-size:10px;line-height:15px;text-align:center}
```
